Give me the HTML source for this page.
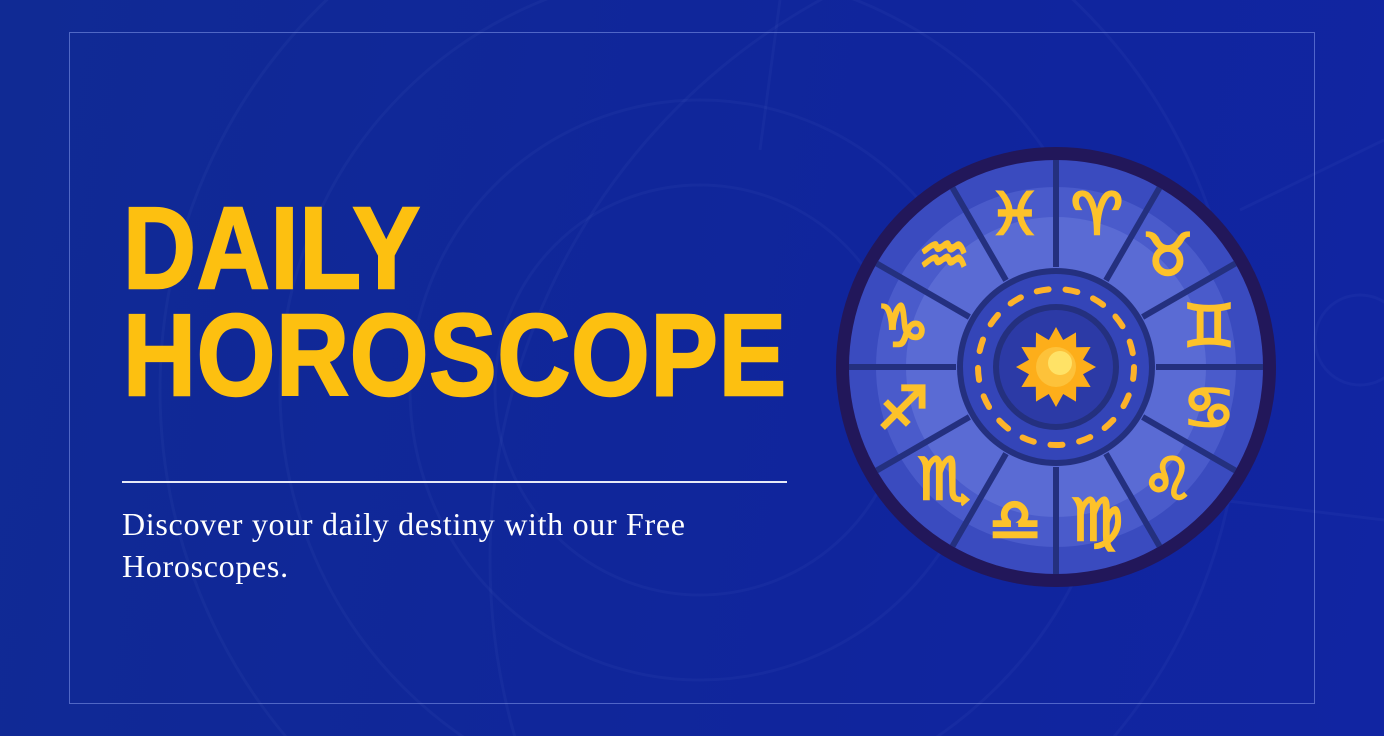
<!DOCTYPE html>
<html><head><meta charset="utf-8"><style>
html,body{margin:0;padding:0;overflow:hidden;width:1384px;height:736px}
body{position:relative;background:linear-gradient(100deg,#102a94 0%,#10259c 60%,#1125a2 100%);font-family:"Liberation Sans",sans-serif}
.frame{position:absolute;left:69px;top:32px;width:1246px;height:672px;border:1px solid rgba(160,180,255,0.45);box-sizing:border-box}
.t{position:absolute;left:123px;color:#fdc010;font-weight:bold;font-size:116px;line-height:1;transform-origin:0 0;transform:scaleX(0.87);letter-spacing:1px;white-space:nowrap;-webkit-text-stroke:2.5px #fdc010}
.line{position:absolute;left:122px;top:481px;width:665px;height:2px;background:#e6e9f7}
.sub{position:absolute;left:122px;top:503px;width:700px;color:#fff;font-family:"Liberation Serif",serif;font-size:32px;letter-spacing:0.7px;line-height:42px}
svg{position:absolute}
</style></head><body>
<svg width="1384" height="736" style="left:0;top:0" fill="none" stroke="rgba(170,190,255,0.045)" stroke-width="3">
<circle cx="700" cy="390" r="205"/>
<circle cx="700" cy="390" r="290"/>
<circle cx="700" cy="390" r="420"/>
<circle cx="700" cy="390" r="540"/>
<circle cx="1130" cy="560" r="640"/>
<line x1="1240" y1="210" x2="1384" y2="140"/>
<line x1="1220" y1="500" x2="1384" y2="520"/>
<line x1="780" y1="0" x2="760" y2="150"/>
<circle cx="1360" cy="340" r="45"/>
</svg>
<div class="frame"></div>
<div class="t" style="top:190px">DAILY</div>
<div class="t" style="top:297px">HOROSCOPE</div>
<div class="line"></div>
<div class="sub">Discover your daily destiny with our Free<br>Horoscopes.</div>
<svg width="440" height="440" style="left:836px;top:147px" viewBox="-220 -220 440 440">
<circle r="220" fill="#22175a"/>
<circle r="207" fill="#3a4bbf"/>
<circle r="180" fill="#4a5bcb"/>
<circle r="150" fill="#5a6bd4"/>
<g stroke="#24307f" stroke-width="6">
<line x1="0" y1="-100" x2="0" y2="-207"/>
<line x1="0" y1="-100" x2="0" y2="-207" transform="rotate(30)"/>
<line x1="0" y1="-100" x2="0" y2="-207" transform="rotate(60)"/>
<line x1="0" y1="-100" x2="0" y2="-207" transform="rotate(90)"/>
<line x1="0" y1="-100" x2="0" y2="-207" transform="rotate(120)"/>
<line x1="0" y1="-100" x2="0" y2="-207" transform="rotate(150)"/>
<line x1="0" y1="-100" x2="0" y2="-207" transform="rotate(180)"/>
<line x1="0" y1="-100" x2="0" y2="-207" transform="rotate(210)"/>
<line x1="0" y1="-100" x2="0" y2="-207" transform="rotate(240)"/>
<line x1="0" y1="-100" x2="0" y2="-207" transform="rotate(270)"/>
<line x1="0" y1="-100" x2="0" y2="-207" transform="rotate(300)"/>
<line x1="0" y1="-100" x2="0" y2="-207" transform="rotate(330)"/>
</g>
<circle r="99" fill="#24307f"/>
<circle r="93" fill="#3445b8"/>
<circle r="78" fill="none" stroke="#fdb22a" stroke-width="6" stroke-linecap="round" stroke-dasharray="12 17"/>
<circle r="63" fill="#24307f"/>
<circle r="57" fill="#2c3aa6"/>
<polygon fill="#fdae1a" points="0,-40 7.2,-27 20,-34.6 20.2,-19.8 34.6,-20 27,-7.2 40,0 27,7.2 34.6,20 20.2,19.8 20,34.6 7.2,27 0,40 -7.2,27 -20,34.6 -20.2,19.8 -34.6,20 -27,7.2 -40,0 -27,-7.2 -34.6,-20 -20.2,-19.8 -20,-34.6 -7.2,-27"/>
<circle r="20" fill="#fdc23a"/>
<circle cx="4" cy="-4" r="12" fill="#ffe266"/>
<g font-family="DejaVu Sans,sans-serif" font-size="58" font-weight="bold" fill="#fdc22a" stroke="#fdc22a" stroke-width="2.5" text-anchor="middle" dominant-baseline="central">
<text x="41" y="-153">♈</text>
<text x="112" y="-112">♉</text>
<text x="153" y="-41">♊</text>
<text x="153" y="41">♋</text>
<text x="112" y="112">♌</text>
<text x="41" y="153">♍</text>
<text x="-41" y="153">♎</text>
<text x="-112" y="112">♏</text>
<text x="-153" y="41">♐</text>
<text x="-153" y="-41">♑</text>
<text x="-112" y="-112">♒</text>
<text x="-41" y="-153">♓</text>
</g>
</svg>
</body></html>
